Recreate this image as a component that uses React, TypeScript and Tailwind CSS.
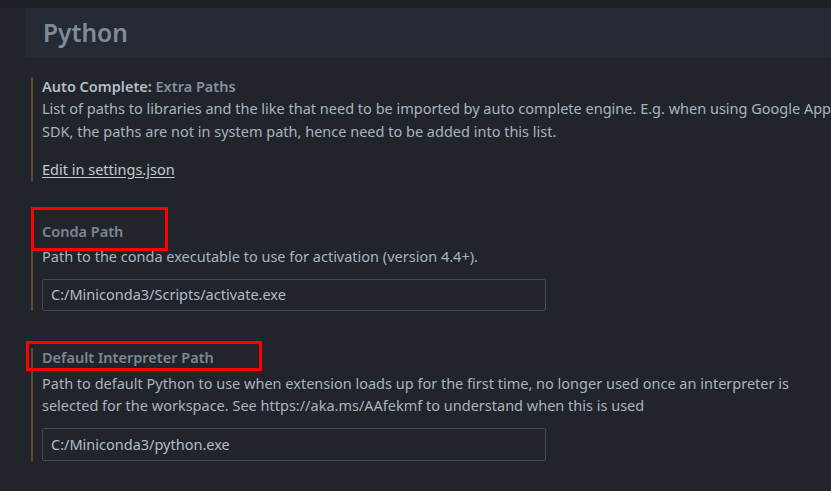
import React from "react";

const font = { fontFamily: '"Noto Sans", "Open Sans", sans-serif' };

export default function App() {
  return (
    <div
      className="w-[831px] h-[491px] overflow-hidden bg-[#21252b] text-[14.5px]"
      style={font}
    >
      <div className="h-2 bg-[#1d2025]" />
      <div className="ml-[25px] h-[50px] bg-[#262a32] flex items-center pl-[18px]">
        <span className="text-[24.5px] font-semibold text-[#7f8c9c] leading-none">
          Python
        </span>
      </div>

      <div className="pl-[31px] pr-0">
        {/* Auto Complete: Extra Paths */}
        <div className="mt-[19px] border-l-2 border-[#5a4a2a] pl-[9px] pb-[2px]">
          <div className="leading-[18px] font-semibold whitespace-nowrap">
            <span className="text-[#b5bec9]">Auto Complete: </span>
            <span className="text-[#8391a1]">Extra Paths</span>
          </div>
          <div className="mt-[2px] leading-[23px] text-[#a8b3c0] whitespace-nowrap">
            <div>
              List of paths to libraries and the like that need to be imported by auto complete engine. E.g. when using Google App Engine
            </div>
            <div>
              SDK, the paths are not in system path, hence need to be added into this list.
            </div>
          </div>
          <div className="mt-[16px] leading-[20px] text-[#c2cad4] underline underline-offset-2">
            Edit in settings.json
          </div>
        </div>

        {/* Conda Path */}
        <div className="mt-[41px] border-l-2 border-[#5a4a2a] pl-[9px]">
          <div className="relative leading-[18px] font-semibold text-[#7b8796]">
            Conda Path
            <div className="absolute left-[-11px] top-[-15px] w-[137px] h-[44px] border-[3px] border-[#ff0000]" />
          </div>
          <div className="mt-[6px] leading-[20px] text-[#a8b3c0] whitespace-nowrap">
            Path to the conda executable to use for activation (version 4.4+).
          </div>
          <div className="mt-[13px] w-[504px] h-[32px] border border-[#434955] rounded-[2px] flex items-center pl-[8px] text-[#b3bcc7]">
            C:/Miniconda3/Scripts/activate.exe
          </div>
        </div>

        {/* Default Interpreter Path */}
        <div className="mt-[37px] border-l-2 border-[#5a4a2a] pl-[9px]">
          <div className="relative leading-[18px] font-semibold text-[#7b8796]">
            Default Interpreter Path
            <div className="absolute left-[-16px] top-[-7px] w-[236px] h-[30px] border-[3px] border-[#ff0000]" />
          </div>
          <div className="mt-[6px] leading-[22px] text-[#a8b3c0] whitespace-nowrap">
            <div>
              Path to default Python to use when extension loads up for the first time, no longer used once an interpreter is
            </div>
            <div>
              selected for the workspace. See https://aka.ms/AAfekmf to understand when this is used
            </div>
          </div>
          <div className="mt-[12px] w-[504px] h-[33px] border border-[#434955] rounded-[2px] flex items-center pl-[8px] text-[#b3bcc7]">
            C:/Miniconda3/python.exe
          </div>
        </div>
      </div>
    </div>
  );
}
